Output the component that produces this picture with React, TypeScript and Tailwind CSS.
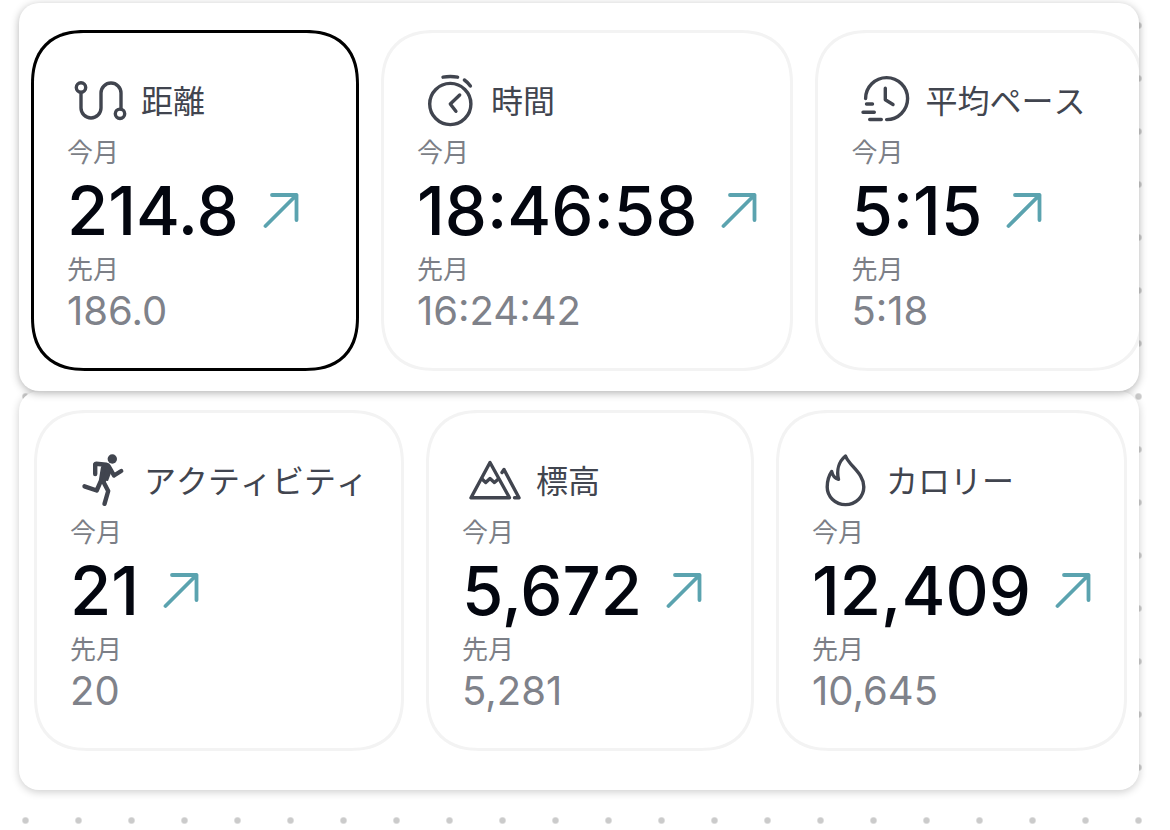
import { useState } from "react";
import type { ReactNode } from "react";

type Metric = {
  id: string;
  label: string;
  current: string;
  previous: string;
  icon: ReactNode;
};

const topMetrics: Metric[] = [
  {
    id: "distance",
    label: "距離",
    current: "214.8",
    previous: "186.0",
    icon: (
      <>
        <circle cx="10" cy="15.5" r="4.7" />
        <path d="M10 20.5v15.5a10 10 0 0 0 20 0V21a10 10 0 0 1 20 0V37" />
        <circle cx="49" cy="41.8" r="4.7" />
      </>
    ),
  },
  {
    id: "time",
    label: "時間",
    current: "18:46:58",
    previous: "16:24:42",
    icon: (
      <>
        <circle cx="29.3" cy="32" r="20.6" />
        <path d="M22 5.2q7.3-1.5 14.6 0M43.4 8q3.6 2.500 6 6" />
        <path d="M38.7 23l-9.4 9 5.600 7.300" />
      </>
    ),
  },
  {
    id: "pace",
    label: "平均ペース",
    current: "5:15",
    previous: "5:18",
    icon: (
      <>
        <path d="M10.6 26.600a21 21 0 1 1 21 21" />
        <path d="M30.3 16.300v11.500l7.700 4.700M11.500 32h6M8 40.300h11.300M14.700 47.500h11.600" />
      </>
    ),
  },
];

const bottomMetrics: Metric[] = [
  {
    id: "activity",
    label: "アクティビティ",
    current: "21",
    previous: "20",
    icon: (
      <>
        <circle cx="38.3" cy="7" r="4.7" fill="currentColor" stroke="none" />
        <path d="M28 12l5 1 4 8-3 8-7-1z" fill="currentColor" stroke="none" />
        <g strokeWidth="4.4">
          <path d="M21.2 22v-9.700q.3-.6 1-.6l10 1q2 .3 3 2.300l4.800 8.500 7.200-4.500" />
          <path d="M29 16l-2 12.700-4.300 9.800-12.200-4.200" />
          <path d="M34 18l-4.500 12 4.700 9-3.700 12.800" />
        </g>
      </>
    ),
  },
  {
    id: "elevation",
    label: "標高",
    current: "5,672",
    previous: "5,281",
    icon: (
      <>
        <path d="M24 10.500L5 45.800h38.500z" />
        <path d="M16 27l3.700 3.500 4.300-4 4.400 4 4-3.500" />
        <path d="M36 20.500l2-3 15 28.300h-4.500" />
      </>
    ),
  },
  {
    id: "calories",
    label: "カロリー",
    current: "12,409",
    previous: "10,645",
    icon: (
      <path d="M29.500 4C33.300 14 47.800 21 47.800 35a18.300 17.600 0 0 1-36.600 0c0-6 1.800-11.500 4.500-15.500 1 4.500 3.500 7 6.800 7.800-2.200-9.300.5-18 7-23.300z" />
    ),
  },
];

function TrendUp() {
  return (
    <svg
      className="size-9 shrink-0 text-[#5ba3af]"
      viewBox="0 0 36 36"
      fill="none"
      stroke="currentColor"
      strokeWidth="3.8"
      strokeLinecap="round"
      strokeLinejoin="round"
      aria-hidden="true"
    >
      <path d="M2.500 33L33.500 2M9 2h24.500v25" />
    </svg>
  );
}

function MetricCard({
  metric,
  selected,
  onSelect,
}: {
  metric: Metric;
  selected: boolean;
  onSelect: () => void;
}) {
  return (
    <button
      type="button"
      aria-pressed={selected}
      onClick={onSelect}
      className={`min-w-[328px] shrink-0 rounded-[54px] border-3 bg-white px-[33px] pt-[39px] pb-[38px] text-left whitespace-nowrap [corner-shape:superellipse(1.25)] ${
        selected ? "border-black" : "border-[#f3f3f3]"
      }`}
    >
      <div className="flex items-center gap-[10px] pl-1 text-[#41454f]">
        <svg
          className="size-[60px] shrink-0"
          viewBox="0 0 60 60"
          fill="none"
          stroke="currentColor"
          strokeWidth="3.4"
          strokeLinecap="round"
          strokeLinejoin="round"
          aria-hidden="true"
        >
          {metric.icon}
        </svg>
        <span className="text-[32px] leading-[60px] [font-kerning:none]">{metric.label}</span>
      </div>
      <div className="text-[26px] leading-[42px] text-[#7c7f87]">今月</div>
      <div className="flex items-center gap-6">
        <span className="text-[67px] leading-[74px] font-medium text-[#03060f]">
          {metric.current}
        </span>
        <TrendUp />
      </div>
      <div className="text-[26px] leading-[44px] text-[#7c7f87]">先月</div>
      <div className="text-[40px] leading-[38px] text-[#7f828a]">{metric.previous}</div>
    </button>
  );
}

export default function App() {
  const [selected, setSelected] = useState("distance");

  const renderCard = (metric: Metric) => (
    <MetricCard
      key={metric.id}
      metric={metric}
      selected={metric.id === selected}
      onSelect={() => setSelected(metric.id)}
    />
  );

  return (
    <main className="min-h-screen bg-white bg-[radial-gradient(circle,#cbcbcb_2.5px,transparent_4px)] bg-[length:53px_53px] bg-[position:-1px_-1px] pt-[3px] pr-[31px] pb-10 pl-[19px] font-['Inter','Noto_Sans_CJK_JP',sans-serif]">
      <section className="relative z-10 flex gap-[22px] overflow-hidden rounded-[20px] bg-white px-3 pt-[27px] pb-5 shadow-[0_2px_8px_rgba(0,0,0,0.3)]">
        {topMetrics.map(renderCard)}
      </section>
      <section className="flex gap-[22px] overflow-hidden rounded-[20px] bg-white px-[15px] pt-[19px] pb-[39px] shadow-[0_2px_8px_rgba(0,0,0,0.2)]">
        {bottomMetrics.map(renderCard)}
      </section>
    </main>
  );
}
